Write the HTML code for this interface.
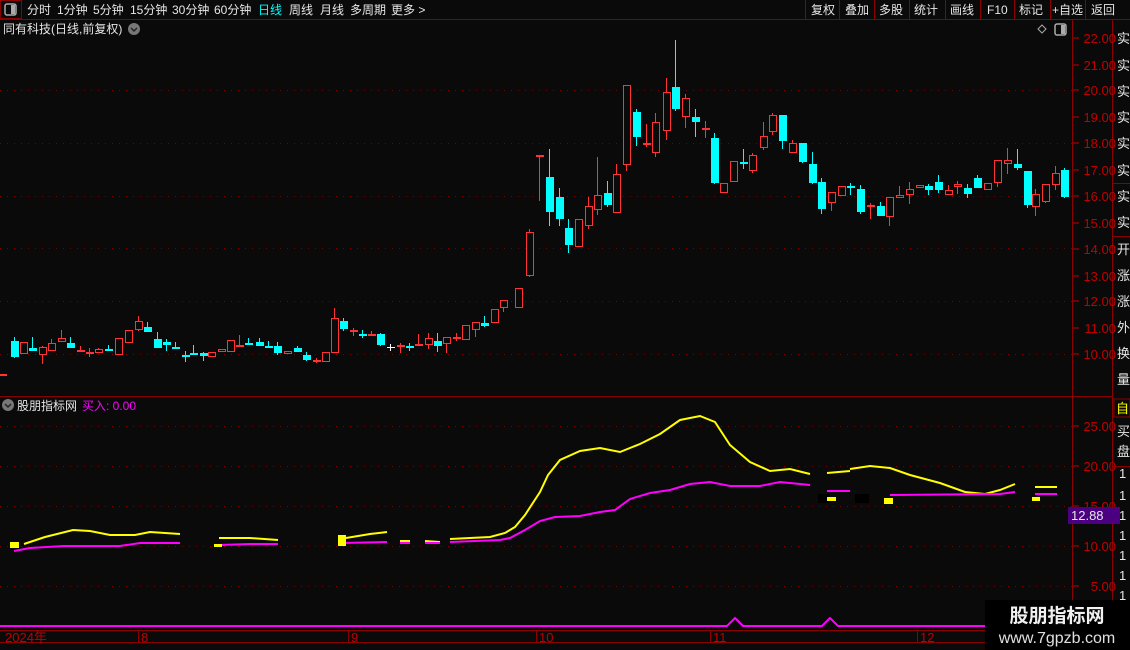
<!DOCTYPE html>
<html><head><meta charset="utf-8"><style>
html,body{margin:0;padding:0;background:#0a0a0a;width:1130px;height:650px;overflow:hidden}
svg{display:block}
text{font-family:"Liberation Sans","Noto Sans CJK SC",sans-serif}
</style></head><body>
<svg id="s" width="1130" height="650" xmlns="http://www.w3.org/2000/svg">
<rect width="1130" height="650" fill="#0a0a0a"/>
<rect x="0.5" y="0.5" width="21" height="18" fill="none" stroke="#8b0000"/>
<rect x="5" y="4" width="11" height="11" rx="2" fill="none" stroke="#aaa" stroke-width="1.5"/>
<rect x="11" y="5" width="4" height="9" fill="#aaa"/>
<line x1="0" y1="19.5" x2="1130" y2="19.5" stroke="#8b0000"/>
<g font-size="12" fill="#e6e6e6">
<text x="27" y="14">分时</text><text x="57" y="14">1分钟</text><text x="93" y="14">5分钟</text>
<text x="130" y="14">15分钟</text><text x="172" y="14">30分钟</text><text x="214" y="14">60分钟</text>
<text x="258" y="14" fill="#00ffff">日线</text><text x="289" y="14">周线</text><text x="320" y="14">月线</text>
<text x="350" y="14">多周期</text><text x="391" y="14">更多 &gt;</text>
<text x="811" y="14">复权</text><text x="845" y="14">叠加</text><text x="879" y="14">多股</text>
<text x="914" y="14">统计</text><text x="950" y="14">画线</text><text x="987" y="14">F10</text>
<text x="1019" y="14">标记</text><text x="1052" y="14">+自选</text><text x="1091" y="14">返回</text>
</g>
<g stroke="#8b0000"><line x1="805.5" y1="0" x2="805.5" y2="19"/><line x1="839.5" y1="0" x2="839.5" y2="19"/><line x1="874.5" y1="0" x2="874.5" y2="19"/><line x1="909.5" y1="0" x2="909.5" y2="19"/><line x1="945.5" y1="0" x2="945.5" y2="19"/><line x1="980.5" y1="0" x2="980.5" y2="19"/><line x1="1014.5" y1="0" x2="1014.5" y2="19"/><line x1="1050.5" y1="0" x2="1050.5" y2="19"/><line x1="1085.5" y1="0" x2="1085.5" y2="19"/></g>
<text x="3" y="33" font-size="12" fill="#e6e6e6">同有科技(日线,前复权)</text>
<circle cx="134" cy="29" r="6" fill="#777"/><path d="M131 28l3 3 3-3" stroke="#222" stroke-width="1.5" fill="none"/>
<path d="M1042 25l4 4-4 4-4-4z" fill="none" stroke="#aaa"/>
<rect x="1055" y="24" width="11" height="11" rx="2" fill="none" stroke="#aaa" stroke-width="1.5"/><rect x="1061" y="25" width="4" height="9" fill="#aaa"/>
<line x1="1072.5" y1="20" x2="1072.5" y2="630" stroke="#8b0000"/>
<line x1="1112.5" y1="20" x2="1112.5" y2="650" stroke="#8b0000"/>
<line x1="0" y1="396.5" x2="1112" y2="396.5" stroke="#8b0000"/>
<line x1="0" y1="630.5" x2="985" y2="630.5" stroke="#8b0000"/>
<line x1="0" y1="642.5" x2="985" y2="642.5" stroke="#8b0000"/>
<g stroke="#7a0000" stroke-dasharray="1 6">
<line x1="0" y1="90.5" x2="1072" y2="90.5"/><line x1="0" y1="143.5" x2="1072" y2="143.5"/><line x1="0" y1="196.5" x2="1072" y2="196.5"/><line x1="0" y1="248.5" x2="1072" y2="248.5"/><line x1="0" y1="301.5" x2="1072" y2="301.5"/><line x1="0" y1="354.5" x2="1072" y2="354.5"/>
<line x1="0" y1="426.5" x2="1072" y2="426.5"/><line x1="0" y1="466.5" x2="1072" y2="466.5"/><line x1="0" y1="506.5" x2="1072" y2="506.5"/><line x1="0" y1="546.5" x2="1072" y2="546.5"/><line x1="0" y1="586.5" x2="1072" y2="586.5"/>
</g>
<g font-size="13" fill="#c00000" text-anchor="end">
<text x="1116" y="43">22.00</text><text x="1116" y="70">21.00</text><text x="1116" y="95">20.00</text><text x="1116" y="122">19.00</text><text x="1116" y="148">18.00</text><text x="1116" y="175">17.00</text><text x="1116" y="201">16.00</text><text x="1116" y="228">15.00</text><text x="1116" y="254">14.00</text><text x="1116" y="281">13.00</text><text x="1116" y="306">12.00</text><text x="1116" y="333">11.00</text><text x="1116" y="359">10.00</text>
<text x="1116" y="431">25.00</text><text x="1116" y="471">20.00</text><text x="1116" y="511">15.00</text><text x="1116" y="551">10.00</text><text x="1116" y="591">5.00</text>
</g>
<g stroke="#c00000">
<line x1="1073" y1="38" x2="1079" y2="38"/><line x1="1073" y1="65" x2="1079" y2="65"/><line x1="1073" y1="90" x2="1079" y2="90"/><line x1="1073" y1="117" x2="1079" y2="117"/><line x1="1073" y1="143" x2="1079" y2="143"/><line x1="1073" y1="170" x2="1079" y2="170"/><line x1="1073" y1="196" x2="1079" y2="196"/><line x1="1073" y1="223" x2="1079" y2="223"/><line x1="1073" y1="249" x2="1079" y2="249"/><line x1="1073" y1="276" x2="1079" y2="276"/><line x1="1073" y1="301" x2="1079" y2="301"/><line x1="1073" y1="328" x2="1079" y2="328"/><line x1="1073" y1="354" x2="1079" y2="354"/>
<line x1="1073" y1="426" x2="1079" y2="426"/><line x1="1073" y1="466" x2="1079" y2="466"/><line x1="1073" y1="506" x2="1079" y2="506"/><line x1="1073" y1="546" x2="1079" y2="546"/><line x1="1073" y1="586" x2="1079" y2="586"/>
</g>
<rect x="1068" y="507" width="52" height="17" fill="#4b0082"/>
<text x="1071" y="520" font-size="13" fill="#e6e6e6">12.88</text>
<g font-size="13" fill="#e6e6e6">
<text x="1117" y="43">实</text><text x="1117" y="70">实</text><text x="1117" y="96">实</text><text x="1117" y="122">实</text><text x="1117" y="148">实</text><text x="1117" y="175">实</text><text x="1117" y="201">实</text><text x="1117" y="227">实</text><text x="1117" y="254">开</text><text x="1117" y="280">涨</text><text x="1117" y="306">涨</text><text x="1117" y="332">外</text><text x="1117" y="358">换</text><text x="1117" y="384">量</text>
<text x="1117" y="436">买</text><text x="1117" y="456">盘</text>
<text x="1119" y="478">1</text><text x="1119" y="500">1</text><text x="1119" y="520">1</text><text x="1119" y="540">1</text><text x="1119" y="560">1</text><text x="1119" y="580">1</text><text x="1119" y="600">1</text>
</g>
<rect x="1114" y="399" width="16" height="18" fill="none" stroke="#8b0000"/><text x="1116" y="413" font-size="13" fill="#ffff00">自</text>
<line x1="1113" y1="183.5" x2="1130" y2="183.5" stroke="#8b0000"/><line x1="1113" y1="236.5" x2="1130" y2="236.5" stroke="#8b0000"/><line x1="1113" y1="466.5" x2="1130" y2="466.5" stroke="#8b0000"/>
<circle cx="8" cy="405" r="6" fill="#777"/><path d="M5 404l3 3 3-3" stroke="#222" stroke-width="1.5" fill="none"/>
<text x="17" y="410" font-size="12" fill="#e6e6e6">股朋指标网</text>
<text x="82" y="410" font-size="12" fill="#ff00ff">买入: 0.00</text>
<g id="c"></g>
<g fill="none" stroke-width="2">
<polyline stroke="#ffff00" points="24,544 45,537 73,530 90,531 110,535 135,535 150,532 165,533 180,534"/>
<polyline stroke="#ff00ff" points="14,551 30,548 64,546 120,546 140,543 180,543"/>
<polyline stroke="#ffff00" points="219,538 250,538 278,540"/>
<polyline stroke="#ff00ff" points="219,545 250,544 278,544"/>
<polyline stroke="#ffff00" points="346,538 370,534 387,532"/>
<polyline stroke="#ff00ff" points="342,543 387,542"/>
<polyline stroke="#ffff00" points="450,539 490,537 505,533 515,527 525,515 540,492 548,475 560,460 580,451 600,448 620,452 640,444 660,434 680,420 700,416 715,422 730,445 750,462 770,471 790,469 810,474"/>
<polyline stroke="#ff00ff" points="450,542 500,540 510,538 525,530 540,521 555,517 580,516 600,512 615,510 630,499 650,493 670,490 690,484 710,482 730,486 760,486 780,482 800,484 810,485"/>
<polyline stroke="#ffff00" points="827,473 850,471"/><polyline stroke="#ff00ff" points="827,491 850,491"/>
<polyline stroke="#ffff00" points="850,469 870,466 890,468 910,475 940,483 965,492 985,494 1000,490 1015,484"/>
<polyline stroke="#ff00ff" points="890,495 1000,494 1015,492"/>
<polyline stroke="#ffff00" points="1035,487 1057,487"/><polyline stroke="#ff00ff" points="1035,494 1057,494"/>
<polyline stroke="#ffff00" points="400,541 410,541"/><polyline stroke="#ffff00" points="425,541 440,542"/>
<polyline stroke="#ff00ff" points="400,543 410,543"/><polyline stroke="#ff00ff" points="425,543 440,543"/>
</g>
<rect x="10" y="542" width="9" height="6" fill="#ffff00"/>
<rect x="338" y="535" width="8" height="11" fill="#ffff00"/>
<rect x="214" y="544" width="8" height="3" fill="#ffff00"/>
<rect x="818" y="494" width="12" height="9" fill="#000"/><rect x="855" y="494" width="14" height="9" fill="#000"/>
<rect x="827" y="497" width="9" height="4" fill="#ffff00"/><rect x="884" y="498" width="9" height="6" fill="#ffff00"/><rect x="1032" y="497" width="8" height="4" fill="#ffff00"/>
<polyline fill="none" stroke="#ff00ff" stroke-width="2" points="0,626 727,626 735,618 743,626 822,626 830,618 838,626 985,626"/>
<g font-size="13" fill="#c00000"><text x="5" y="642">2024年</text><text x="141" y="642">8</text><text x="351" y="642">9</text><text x="539" y="642">10</text><text x="713" y="642">11</text><text x="920" y="642">12</text></g>
<g stroke="#8b0000"><line x1="138.5" y1="630" x2="138.5" y2="642"/><line x1="348.5" y1="630" x2="348.5" y2="642"/><line x1="536.5" y1="630" x2="536.5" y2="642"/><line x1="710.5" y1="630" x2="710.5" y2="642"/><line x1="917.5" y1="630" x2="917.5" y2="642"/></g>
<rect x="985" y="600" width="145" height="50" fill="#000"/>
<text x="1057" y="622" font-size="19" font-weight="bold" fill="#f0f0f0" text-anchor="middle">股朋指标网</text>
<text x="1057" y="643" font-size="16" fill="#e0e0e0" text-anchor="middle">www.7gpzb.com</text>
</svg>
<script>
var D=[
[14,'c',341,357,337,358],[23,'r',342,354,342,354],[32,'c',348,351,337,351],[42,'r',347,355,346,364],[51,'r',343,351,339,351],[61,'r',338,342,330,342],[70,'c',343,348,337,348],[80,'r',350,352,346,352],[89,'r',352,354,348,357],[98,'r',349,353,348,353],[108,'c',349,351,345,351],[118,'r',338,355,338,355],[128,'r',330,343,330,343],[138,'r',321,330,316,331],[147,'c',327,332,322,332],[157,'c',339,348,332,348],[166,'c',342,345,339,351],[175,'c',347,349,342,349],[185,'c',355,357,351,362],[193,'c',353,355,345,355],[203,'c',353,356,352,361],[211,'r',352,357,352,357],[221,'r',349,352,349,352],[230,'r',340,352,340,352],[239,'r',345,346,335,346],[248,'c',343,345,338,345],[259,'c',342,346,338,346],[268,'c',346,348,341,348],[277,'c',346,353,342,355],[287,'r',351,354,351,354],[297,'c',348,352,346,352],[306,'c',355,360,352,361],[316,'r',360,362,358,363],[325,'r',352,362,352,362],[334,'r',318,353,308,353],[343,'c',321,329,318,331],[353,'r',330,332,328,336],[362,'c',334,336,330,338],[371,'r',334,336,331,336],[380,'c',334,345,333,346],[390,'w',347,349,344,351],[400,'r',345,347,343,353],[409,'c',346,348,343,351],[418,'r',344,346,334,346],[428,'r',338,345,333,349],[437,'c',341,346,333,352],[446,'r',337,344,337,353],[456,'r',337,339,333,341],[465,'r',325,340,325,340],[475,'r',322,330,322,337],[484,'c',323,326,316,327],[494,'r',309,323,309,323],[503,'r',300,308,300,312],[518,'r',288,308,288,308],[529,'r',232,276,229,277],
[539,'r',155,157,155,201],[549,'c',177,212,149,226],[559,'c',197,219,188,226],[568,'c',228,245,219,253],[578,'r',219,247,219,247],[588,'r',206,226,197,229],[597,'r',195,210,157,215],[607,'c',193,205,181,207],[616,'r',174,213,164,213],[626,'r',85,165,85,171],[636,'c',112,137,109,146],[646,'r',143,145,124,147],[655,'r',122,153,113,157],[666,'r',92,131,78,140],[675,'c',87,109,40,111],[685,'r',98,117,94,128],[695,'c',117,122,109,137],[705,'r',128,130,121,138],[714,'c',138,183,133,184],[723,'r',183,193,183,193],[733,'r',161,182,161,182],[743,'c',162,164,149,169],[752,'r',155,171,153,173],[763,'r',136,148,122,150],[772,'r',115,132,113,135],[782,'c',115,141,115,149],[792,'r',143,153,140,153],[802,'c',143,162,143,163],[812,'c',164,183,152,184],[821,'c',182,209,178,214],[831,'r',192,203,192,211],[841,'r',186,196,186,196],[850,'c',186,188,183,195],[860,'c',189,212,185,214],[870,'r',205,207,203,219],[880,'c',206,216,202,216],[889,'r',197,217,197,226],[899,'r',195,198,186,198],[909,'r',189,195,182,204],[919,'r',185,188,185,188],[928,'c',186,190,184,195],[938,'c',182,190,175,193],[948,'r',190,195,185,195],[957,'r',184,187,181,194],[967,'c',188,194,184,198],[977,'c',178,188,175,188],[987,'r',183,190,183,190],[997,'r',160,183,160,187],[1007,'r',160,164,148,174],[1017,'c',164,168,149,170],[1027,'c',171,205,171,208],[1035,'r',194,207,189,216],[1045,'r',184,202,184,203],[1055,'r',173,185,166,190],[1064,'c',170,197,168,198]];
var h='<rect x="0" y="374" width="7" height="2" fill="#ff3333"/>';
D.forEach(function(d){var x=d[0],t=d[1],a=d[2],b=d[3],hi=d[4],lo=d[5];
var col=t=='c'?'#00ffff':(t=='w'?'#ffffff':'#ff3333');
h+='<line x1="'+(x+.5)+'" y1="'+hi+'" x2="'+(x+.5)+'" y2="'+lo+'" stroke="'+col+'"/>';
var hgt=Math.max(b-a,1);
if(t=='c')h+='<rect x="'+(x-3)+'" y="'+a+'" width="8" height="'+hgt+'" fill="#00ffff"/>';
else if(t=='w')h+='<rect x="'+(x-3)+'" y="'+a+'" width="8" height="1" fill="#fff"/>';
else if(hgt<=2)h+='<rect x="'+(x-3)+'" y="'+a+'" width="8" height="2" fill="#ff3333"/>';
else h+='<rect x="'+(x-2.5)+'" y="'+(a+.5)+'" width="7" height="'+(hgt-1)+'" fill="#0a0a0a" stroke="#ff3333"/>';
});
document.getElementById('c').innerHTML=h;
</script>
</body></html>
